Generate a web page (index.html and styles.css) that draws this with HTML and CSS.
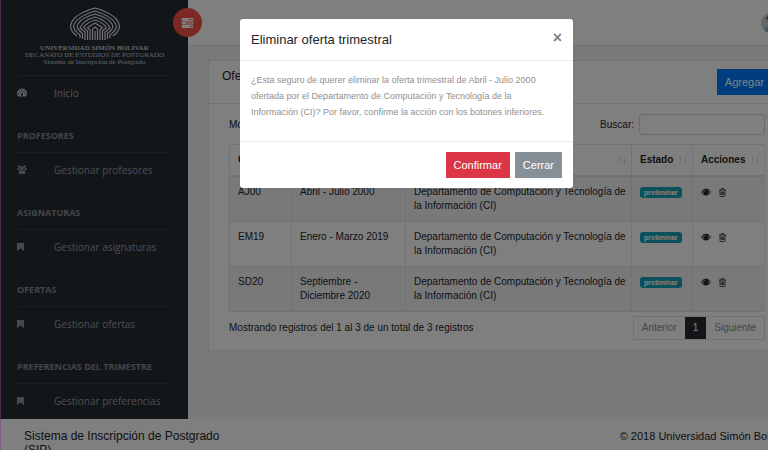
FILE: index.html
```html
<!DOCTYPE html>
<html lang="es">
<head>
<meta charset="utf-8">
<title>Sistema de Inscripción de Postgrado</title>
<link rel="stylesheet" href="styles.css">
</head>
<body>
<svg class="sprite" aria-hidden="true">
  <symbol id="bookmark" viewBox="0 0 14 16"><path d="M0 0h14v16l-7-5-7 5z"/></symbol>
  <symbol id="eye" viewBox="0 0 20 14"><path fill-rule="evenodd" d="M0 7C5-2 15-2 20 7 15 16 5 16 0 7zM2 7c1 2 2.500 3.300 4 4C4 8 4 5.500 5.500 3.200 4 4 3 5.200 2 7zm16 0c-1-1.800-2-3-3.500-3.800C16 5.500 16 8 14 11c1.500-.7 3-2 4-4zM10 2.500C8 2.500 6.500 4 6.500 6h1.200C7.700 4.700 8.600 3.700 10 3.700z"/></symbol>
  <symbol id="trash" viewBox="0 0 16 18"><path fill="none" stroke="currentColor" stroke-width="1.600" d="M1 4h14M5 4l1-3h4l1 3M3 4v11q0 2 2 2h6q2 0 2-2V4M5.500 7v7M8 7v7M10.500 7v7"/></symbol>
</svg>
<div class="page">
  <div class="columns">
    <aside class="sidebar">
      <div class="brand">
        <svg class="dome" viewBox="0 0 50 34" role="img" aria-label="Universidad Simón Bolívar">
          <g fill="none" stroke="currentColor" stroke-width="1.200">
            <path d="M7 29Q-1 23 1 17 4 7 25 1q21 6 24 16 2 6-6 12"/>
            <path d="M10 31V28Q2 22 4 17.500 8 9 25 4q17 5 21 13.500 2 4.500-6 10.500v3"/>
            <path d="M12.500 32V26.500Q5 21 8 17 12 10.500 25 7q13 3.500 17 10 3 4-4.500 9.500V32"/>
            <path d="M15 33V25l-5-4Q13 13.500 25 10q12 3.500 15 11l-5 4v8"/>
            <path d="M17.500 33V24l-4-3.500Q17 15.500 25 13q8 2.500 11.500 7.500L32.500 24v9"/>
            <path d="M20 33V23l-2.500-2.500L25 16l7.500 4.500L30 23v10"/>
            <path d="M22.500 33V22L25 20l2.500 2v11M25 24v9"/>
          </g>
        </svg>
        <strong>UNIVERSIDAD SIMÓN BOLÍVAR</strong>
        <span>DECANATO DE ESTUDIOS DE POSTGRADO</span>
        <span>Sistema de Inscripción de Postgrado</span>
      </div>
      <nav class="menu">
        <a class="item active" href="#"><svg class="icon" viewBox="0 0 18 16"><path fill-rule="evenodd" d="M2 15Q0 13 0 10a9 9 0 0 1 18 0q0 3-2 5zM3 9a1.200 1.200 0 1 0 .1 0zM5 4.500a1.200 1.200 0 1 0 .1 0zM9 2.500a1.200 1.200 0 1 0 .1 0zM13 4.500a1.200 1.200 0 1 0 .1 0zM15 9a1.200 1.200 0 1 0 .1 0zM10 6l-1.500 4a2 2 0 1 0 1.500.5L11 6z"/></svg>Inicio</a>
        <h3>PROFESORES</h3>
        <a class="item" href="#"><svg class="icon" viewBox="0 0 20 18"><circle cx="4" cy="3" r="2.500"/><circle cx="16" cy="3" r="2.500"/><circle cx="10" cy="6" r="4"/><path d="M0 9q0-3 2-3l3 1q0 2 1 3H0zM20 9q0-3-2-3l-3 1q0 2-1 3h6zM3 15q0-5 3-5 4 2 8 0 3 0 3 5 0 3-3 3H6q-3 0-3-3z"/></svg>Gestionar profesores</a>
        <h3>ASIGNATURAS</h3>
        <a class="item" href="#"><svg class="icon mark"><use href="#bookmark"/></svg>Gestionar asignaturas</a>
        <h3>OFERTAS</h3>
        <a class="item" href="#"><svg class="icon mark"><use href="#bookmark"/></svg>Gestionar ofertas</a>
        <h3>PREFERENCIAS DEL TRIMESTRE</h3>
        <a class="item" href="#"><svg class="icon mark"><use href="#bookmark"/></svg>Gestionar preferencias</a>
      </nav>
      <button class="toggle" aria-label="Contraer menú"><svg viewBox="0 0 14 12"><path fill-rule="evenodd" d="M1 0h12q1 0 1 1v1.500q0 1-1 1H1q-1 0-1-1V1q0-1 1-1zM8 1.200v1h5v-1zM1 4.200h12q1 0 1 1v1.500q0 1-1 1H1q-1 0-1-1V5.200q0-1 1-1zM5 5.500v1h8v-1zM1 8.400h12q1 0 1 1v1.500q0 1-1 1H1q-1 0-1-1V9.400q0-1 1-1zM10 9.700v1h3v-1z"/></svg></button>
    </aside>
    <div class="main">
      <header class="topbar">
        <svg class="avatar" viewBox="0 0 20 20" role="img" aria-label="Usuario"><circle cx="10" cy="10" r="10" fill="#c8ccd0"/><path d="M4 18Q3 13 10 13t6 5Q10 22 4 18z" fill="#7fb4c8"/><circle cx="10" cy="8" r="4.500" fill="#e5c3ae"/><path d="M5 8Q5 2 10 2t5 6Q12 4 9 5 6 5 5 8z" fill="#4a3c35"/></svg>
      </header>
      <main class="content">
        <section class="card">
          <div class="card-head"><h2>Ofertas</h2><button class="btn blue">Agregar</button></div>
          <div class="card-body">
            <div class="filters"><span>Mostrar</span><label class="search">Buscar: <input type="search"></label></div>
            <table>
              <colgroup><col class="c-code"><col class="c-term"><col><col class="c-state"><col class="c-act"></colgroup>
              <thead><tr><th>Código</th><th>Trimestre</th><th><div>Departamento <i>↑↓</i></div></th><th><div>Estado <i>↑↓</i></div></th><th><div>Acciones <i>↑↓</i></div></th></tr></thead>
              <tbody>
                <tr><td>AJ00</td><td>Abril - Julio 2000</td><td>Departamento de Computación y Tecnología de la Información (CI)</td><td><span class="badge">preliminar</span></td><td><a href="#" aria-label="Ver"><svg class="eye"><use href="#eye"/></svg></a><a href="#" aria-label="Eliminar"><svg class="trash"><use href="#trash"/></svg></a></td></tr>
                <tr><td>EM19</td><td>Enero - Marzo 2019</td><td>Departamento de Computación y Tecnología de la Información (CI)</td><td><span class="badge">preliminar</span></td><td><a href="#" aria-label="Ver"><svg class="eye"><use href="#eye"/></svg></a><a href="#" aria-label="Eliminar"><svg class="trash"><use href="#trash"/></svg></a></td></tr>
                <tr><td>SD20</td><td>Septiembre - Diciembre 2020</td><td>Departamento de Computación y Tecnología de la Información (CI)</td><td><span class="badge">preliminar</span></td><td><a href="#" aria-label="Ver"><svg class="eye"><use href="#eye"/></svg></a><a href="#" aria-label="Eliminar"><svg class="trash"><use href="#trash"/></svg></a></td></tr>
              </tbody>
            </table>
            <div class="table-foot"><span>Mostrando registros del 1 al 3 de un total de 3 registros</span>
              <nav class="pages"><a href="#">Anterior</a><a class="current" href="#">1</a><a href="#">Siguiente</a></nav></div>
          </div>
        </section>
      </main>
    </div>
  </div>
  <footer class="footer"><p class="system">Sistema de Inscripción de Postgrado (SIP)</p><p class="rights">© 2018 Universidad Simón Bolívar</p></footer>
</div>
<div class="backdrop">
  <div class="modal" role="dialog" aria-modal="true" aria-labelledby="modal-title">
    <div class="modal-head"><h1 id="modal-title">Eliminar oferta trimestral</h1><button class="close" aria-label="Cerrar ventana">×</button></div>
    <p class="modal-body">¿Esta seguro de querer eliminar la oferta trimestral de Abril - Julio 2000 ofertada por el Departamento de Computación y Tecnología de la Información (CI)? Por favor, confirme la acción con los botones inferiores.</p>
    <div class="modal-foot"><button class="btn red">Confirmar</button><button class="btn gray">Cerrar</button></div>
  </div>
</div>
</body>
</html>
```
FILE: styles.css
```css
* { box-sizing: border-box; }
body { margin: 0; height: 100vh; overflow: hidden; background: #f1f2f7; color: #212529; font: 10px/14px "Liberation Sans", sans-serif; }
body::after { content: ""; position: fixed; inset: 0 auto 0 0; width: 1px; background: rgba(130, 60, 125, .5); }
h1, h2, h3, p { margin: 0; }
a { color: inherit; text-decoration: none; }
button, input { font: inherit; }
svg { fill: currentColor; }
.sprite { position: absolute; width: 0; height: 0; }

.page { width: calc(100% + 38px); }
.columns { display: flex; min-height: 419px; }

.sidebar { position: relative; flex: none; width: 188px; padding: 7px 16px 0 17px; background: #272c33; font-family: "Open Sans", sans-serif; }
.brand { display: flex; flex-direction: column; align-items: center; height: 69px; border-bottom: 1px solid #3d4148; color: #c4c7cc; font: 7px/7px "Liberation Serif", serif; white-space: nowrap; }
.brand .dome { width: 50px; height: 34px; margin-bottom: 4px; color: #e4e6ea; }
.menu h3 { height: 44px; padding-top: 20px; border-bottom: 1px solid #393d44; color: #878b92; font-size: 9px; line-height: 14px; font-weight: 700; white-space: nowrap; }
.item { display: flex; align-items: center; height: 33px; color: #9a9da3; font-size: 10px; }
.item.active { color: #a4a7ad; }
.icon { width: 10px; height: 9px; margin-right: 27px; color: #8b939b; }
.active .icon { color: #c8cace; }
.icon.mark { width: 7px; height: 8px; margin-right: 30px; }
.toggle { position: absolute; top: 8px; right: -14px; display: grid; place-items: center; width: 29px; height: 29px; padding: 0; border: 0; border-radius: 50%; background: #fa5246; color: #fff; }
.toggle svg { width: 13px; height: 10px; }

.main { flex: 1; min-width: 0; }
.topbar { display: flex; justify-content: flex-end; align-items: center; height: 46px; padding-right: 25px; border-bottom: 1px solid #e0e1e8; background: #fff; }
.avatar { width: 20px; height: 20px; }
.content { padding: 14px 20px 20px; }
.card { border: 1px solid #e3e4ea; background: #fff; }
.card-head { display: flex; justify-content: space-between; align-items: center; height: 43px; padding: 0 13px; border-bottom: 1px solid #e3e4ea; }
.card-head h2 { padding-bottom: 12px; font-size: 12px; font-weight: 400; }
.btn { height: 26px; padding: 0 8px; border: 0; color: #fff; font-size: 11px; line-height: 16px; }
.blue { background: #007bff; }
.red { background: #dc3545; }
.gray { background: #868e96; }
.card-body { padding: 10px 20px; }
.filters { display: flex; justify-content: space-between; align-items: center; }
.search { display: flex; align-items: center; gap: 5px; }
.search input { width: 126px; height: 21px; border: 1px solid #d4d6dc; border-radius: 3px; background: #fff; }

table { width: 100%; margin-top: 9px; border-collapse: collapse; table-layout: fixed; }
.c-code { width: 62px; }
.c-term { width: 114px; }
.c-state { width: 61px; }
.c-act { width: 72px; }
th, td { padding: 8px 4px 8px 8px; border: 1px solid #e2e5e9; text-align: left; vertical-align: top; }
th { border-bottom: 2px solid #dee2e6; }
th div { display: flex; justify-content: space-between; }
th i { color: #bbb; font-style: normal; font-weight: 400; }
tbody tr:nth-child(odd) { background: #f2f2f2; }
.badge { display: inline-block; padding: 0 4px; border-radius: 3px; background: #17a2b8; color: #fff; font-size: 7px; line-height: 11px; font-weight: 700; }
td svg { display: inline-block; vertical-align: middle; }
.eye { width: 10px; height: 8px; margin-right: 7px; }
.trash { width: 9px; height: 9px; }
.table-foot { display: flex; justify-content: space-between; align-items: center; margin-top: 4px; }
.pages { display: flex; border: 1px solid #dee2e6; color: #868e96; }
.pages a { padding: 4px 8px; }
.pages .current { background: #272c33; color: #fff; }

.footer { display: flex; justify-content: space-between; padding: 10px 18px 10px 24px; background: #fff; font-size: 12px; }
.footer .system { width: 210px; }
.footer .rights { font-size: 11px; }

.backdrop { position: fixed; inset: 0 -45px 0 0; display: flex; justify-content: center; align-items: flex-start; padding-top: 19px; background: rgba(0, 0, 0, .5); }
.modal { width: 333px; border-radius: 3px; background: #fff; }
.modal-head { display: flex; justify-content: space-between; align-items: center; height: 42px; padding: 0 11px; border-bottom: 1px solid #e9ecef; }
.modal-head h1 { font-size: 13px; font-weight: 400; }
.close { padding: 0 0 4px; border: 0; background: none; color: #7f7f7f; font-size: 16px; line-height: 16px; font-weight: 700; }
.modal-body { padding: 11px 16px 21px 11px; color: #8f8f8f; font-size: 9px; line-height: 16px; }
.modal-foot { display: flex; justify-content: flex-end; gap: 5px; padding: 10px 11px; border-top: 1px solid #e9ecef; }
```
